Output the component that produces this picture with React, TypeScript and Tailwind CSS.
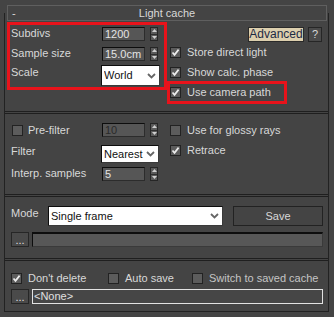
const Check = ({ checked = false }: { checked?: boolean }) => (
  <span className="w-[11px] h-[11px] shrink-0 border border-[#222] bg-[#5c5c5c] flex items-center justify-center">
    {checked && (
      <svg width="9" height="9" viewBox="0 0 9 9">
        <path d="M1.5 4.5 L3.5 6.8 L7.6 1.6" stroke="#ececec" strokeWidth="1.7" fill="none" />
      </svg>
    )}
  </span>
);

const CheckRow = ({ label, checked, dim }: { label: string; checked?: boolean; dim?: boolean }) => (
  <div className="h-[13px] flex items-center">
    <Check checked={checked} />
    <span className={`ml-[6px] whitespace-nowrap ${dim ? "text-[#c4c4c4]" : ""}`}>{label}</span>
  </div>
);

const Spinner = () => (
  <div className="w-[8px] h-[14px] flex flex-col border border-[#262626] bg-[#5a5a5a]">
    <div className="flex-1 flex items-center justify-center border-b border-[#2e2e2e]">
      <svg width="5" height="3" viewBox="0 0 5 3">
        <path d="M0 3 L2.5 0 L5 3Z" fill="#cfcfcf" />
      </svg>
    </div>
    <div className="flex-1 flex items-center justify-center">
      <svg width="5" height="3" viewBox="0 0 5 3">
        <path d="M0 0 L2.5 3 L5 0Z" fill="#cfcfcf" />
      </svg>
    </div>
  </div>
);

const SpinField = ({ value, disabled }: { value: string; disabled?: boolean }) => (
  <div className="flex items-center gap-[5px]">
    <div
      className={`w-[43px] h-[14px] bg-[#565656] border border-[#2c2c2c] border-t-[#0d0d0d] border-l-[#0d0d0d] pl-[2px] leading-[12px] ${
        disabled ? "text-[#2a2a2a]" : "text-[#e4e4e4]"
      }`}
    >
      {value}
    </div>
    <Spinner />
  </div>
);

const Chevron = () => (
  <svg width="9" height="6" viewBox="0 0 9 6" className="shrink-0">
    <path d="M1 1 L4.5 4.5 L8 1" stroke="#666" strokeWidth="1.8" fill="none" />
  </svg>
);

const Dropdown = ({ value, w, h }: { value: string; w: string; h: string }) => (
  <div
    className={`${w} ${h} bg-white border border-[#3a3a3a] border-t-[#0d0d0d] border-l-[#0d0d0d] flex items-center pl-[2px] pr-[3px] text-[#111] overflow-hidden`}
  >
    <span className="flex-1 min-w-0 whitespace-nowrap overflow-hidden">{value}</span>
    <Chevron />
  </div>
);

const Separator = () => <div className="h-[3px] border-y border-[#1f1f1f]" />;

const DotsButton = () => (
  <div className="w-[18px] h-[15px] border border-[#262626] bg-[#4a4a4a] flex items-center justify-center leading-[10px] text-[#e0e0e0]">
    ...
  </div>
);

export default function App() {
  return (
    <div className="w-[334px] h-[317px] bg-[#444] pt-[5px] font-['Liberation_Sans',Arial,sans-serif] text-[11px] leading-[13px] text-[#d8d8d8] overflow-hidden">
      <div className="relative z-10 mx-[7px] h-[16px] border border-[#5f5f5f] bg-[#444] grid grid-cols-[1fr_auto_1fr] items-center">
        <span className="pl-[4px]">-</span>
        <span>Light cache</span>
        <span />
      </div>

      <div className="-mt-[8px] ml-[4px] w-[325px] h-[299px] border-x border-b border-[#222]">
        {/* top section */}
        <div className="h-[98px] pt-[9px] pl-[2px] flex">
          <div className="w-[160px] h-[68px] border-[3px] border-[#e8131b] pt-[2px] pl-[1px] flex flex-col">
            <div className="flex items-start">
              <span className="w-[91px]">Subdivs</span>
              <SpinField value="1200" />
            </div>
            <div className="flex items-start mt-[6px]">
              <span className="w-[91px]">Sample size</span>
              <SpinField value="15.0cm" />
            </div>
            <div className="flex items-start mt-[4px]">
              <span className="w-[90px] pt-[1px]">Scale</span>
              <Dropdown value="World" w="w-[59px]" h="h-[21px]" />
            </div>
          </div>

          <div className="flex-1 flex flex-col">
            <div className="mt-[5px] flex justify-end gap-[4px] pr-[6px]">
              <div className="w-[56px] h-[15px] bg-[#dccfae] border border-[#2a2a2a] text-[#1c2a44] text-[12px] leading-[13px] flex items-center justify-center">
                Advanced
              </div>
              <div className="w-[14px] h-[15px] bg-[#4a4a4a] border border-[#262626] leading-[13px] flex items-center justify-center">
                ?
              </div>
            </div>
            <div className="mt-[4px] pl-[3px]">
              <CheckRow label="Store direct light" checked />
            </div>
            <div className="mt-[7px] pl-[3px]">
              <CheckRow label="Show calc. phase" checked />
            </div>
            <div className="mt-[2px] w-[120px] border-[3px] border-[#e8131b] py-[2px]">
              <CheckRow label="Use camera path" checked />
            </div>
          </div>
        </div>

        <Separator />

        {/* pre-filter section */}
        <div className="h-[80px] pt-[9px] flex">
          <div className="w-[162px] pl-[6px] flex flex-col">
            <div className="flex items-center">
              <div className="w-[91px] flex items-center pl-[1px]">
                <Check />
                <span className="ml-[5px]">Pre-filter</span>
              </div>
              <SpinField value="10" disabled />
            </div>
            <div className="flex items-start mt-[8px]">
              <span className="w-[90px]">Filter</span>
              <Dropdown value="Nearest" w="w-[58px]" h="h-[18px]" />
            </div>
            <div className="flex items-start mt-[4px]">
              <span className="w-[91px]">Interp. samples</span>
              <SpinField value="5" />
            </div>
          </div>
          <div className="flex-1 flex flex-col pl-[3px]">
            <div className="mt-[1px]">
              <CheckRow label="Use for glossy rays" />
            </div>
            <div className="mt-[7px]">
              <CheckRow label="Retrace" checked />
            </div>
          </div>
        </div>

        <Separator />

        {/* mode section */}
        <div className="h-[61px] pt-[9px] pl-[6px]">
          <div className="flex items-start">
            <span className="w-[37px] pt-[1px]">Mode</span>
            <Dropdown value="Single frame" w="w-[175px]" h="h-[20px]" />
            <div className="ml-[10px] w-[90px] h-[20px] border border-[#222] bg-[#444] flex items-center justify-center">
              Save
            </div>
          </div>
          <div className="mt-[6px] flex gap-[3px]">
            <DotsButton />
            <div className="w-[291px] h-[15px] bg-[#575757] border border-[#3a3a3a] border-t-2 border-t-[#0d0d0d] border-l-[#0d0d0d]" />
          </div>
        </div>

        <Separator />

        {/* cache section */}
        <div className="h-[50px] pt-[11px] pl-[6px]">
          <div className="flex">
            <div className="w-[97px]">
              <CheckRow label="Don't delete" checked />
            </div>
            <div className="w-[84px]">
              <CheckRow label="Auto save" />
            </div>
            <CheckRow label="Switch to saved cache" dim />
          </div>
          <div className="mt-[4px] flex gap-[3px]">
            <DotsButton />
            <div className="w-[291px] h-[15px] border border-[#e2e2e2] bg-[#464646] pl-[1px] leading-[13px] text-[#e0e0e0]">
              &lt;None&gt;
            </div>
          </div>
        </div>
      </div>
    </div>
  );
}
